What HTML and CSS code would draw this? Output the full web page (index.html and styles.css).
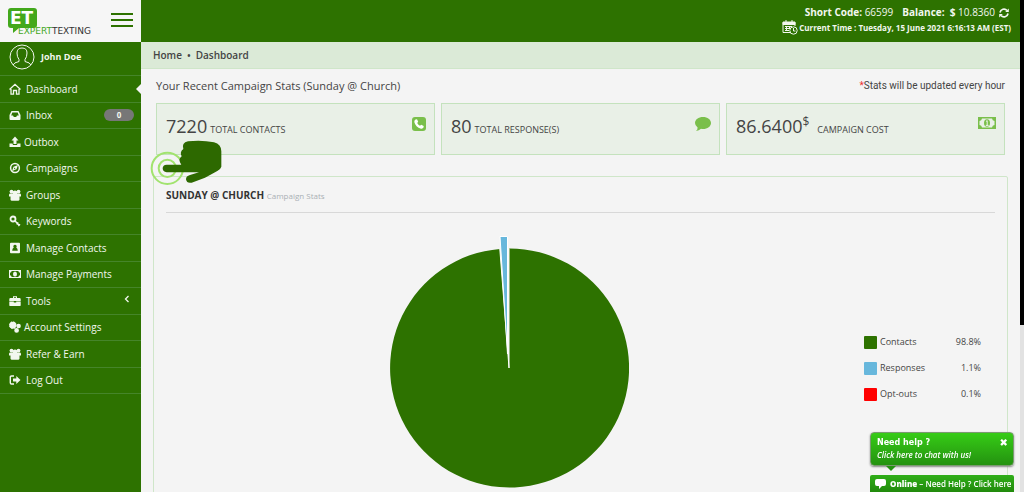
FILE: index.html
```html
<!DOCTYPE html>
<html lang="en">
<head>
<meta charset="utf-8">
<title>Expert Texting - Dashboard</title>
<meta name="viewport" content="width=device-width, initial-scale=1">
<link rel="stylesheet" href="styles.css">
</head>
<body>
<svg class="sprite" aria-hidden="true">
  <symbol id="money" viewBox="0 0 18 12"><path fill="currentColor" fill-rule="evenodd" d="M0 0h18v12H0zM4 1.500A3 3 0 0 1 1.500 4v4A3 3 0 0 1 4 10.500h10A3 3 0 0 1 16.500 8V4A3 3 0 0 1 14 1.500z"/><ellipse cx="9" cy="6" rx="3" ry="3.800" fill="currentColor"/><path d="M8 4.500 9.200 3.600v4.800M7.800 8.400h2.800" fill="none" stroke="#eef4ec"/></symbol>
  <symbol id="groups" viewBox="0 0 12 12"><circle cx="2.500" cy="2.600" r="1.900"/><circle cx="9.500" cy="2.600" r="1.900"/><circle cx="6" cy="4" r="2.400"/><path d="M0 7.500V5.800Q.2 4.400 1.500 4.500h9Q11.800 4.400 12 5.800v1.700h-1.500v3.300q-.3 1-1.300 1H2.800q-1 0-1.300-1V7.500z"/></symbol>
</svg>
<div class="app">
  <header class="brand">
    <a class="logo" href="#" aria-label="Expert Texting">
      <svg width="80" height="28" viewBox="0 0 80 28" aria-hidden="true">
        <path class="logo-mark" d="M3 0h23q3 0 3 3v14q0 3-3 3H11l-6 5V20H3q-3 0-3-3V3q0-3 3-3z"/>
        <text class="logo-letters" x="2" y="16">ET</text>
      </svg>
      <span class="logo-name"><span class="logo-first">EXPERT</span>TEXTING</span>
    </a>
    <button class="menu-button" type="button" aria-label="Toggle menu"><span></span><span></span><span></span></button>
  </header>
  <header class="topbar">
    <div class="account"><span><b>Short Code:</b> 66599</span><span><b>Balance:</b>&nbsp; <b>$</b> 10.8360</span>
      <button class="refresh" type="button" aria-label="Refresh balance"><svg width="10" height="10" viewBox="0 0 10 10"><path d="M1 4.500A4 4 0 0 1 8 2.500M9 5.500A4 4 0 0 1 2 7.500" fill="none" stroke="currentColor" stroke-width="1.700"/><path d="M9.800.4V4H6.200zM.2 9.600V6h3.600z" fill="currentColor"/></svg></button>
    </div>
    <div class="clock">
      <svg width="16" height="15" viewBox="0 0 16 15" fill="none" stroke="currentColor"><path d="M8 12.500H1V2h12v4M1 4.500h12M4 0v3M10 0v3M3 6.500h7M3 8.500h5M3 10.500h4M4.500 6v5M7.500 6v3"/><path d="M1 2.500h12v2H1z" fill="currentColor"/><circle cx="11.500" cy="10.500" r="3.700"/><path d="M11.500 8v3H13.500"/></svg>
      <span>Current Time : Tuesday, 15 June 2021 6:16:13 AM (EST)</span>
    </div>
  </header>
  <aside class="sidebar">
    <div class="user">
      <svg width="26" height="26" viewBox="0 0 26 26" fill="none" stroke="currentColor"><circle cx="13" cy="13" r="12"/><path d="M4 21Q5 18.500 10 17.500v-2Q8 13 8 9q0-5 5-5t5 5q0 4-2 6.500v2q5 1 6 3.500"/></svg>
      <span>John Doe</span>
    </div>
    <nav class="nav">
      <a class="active" href="#"><svg viewBox="0 0 12 12"><path d="M.5 6.500 6 1.300l5.500 5.200M2 6v5.200h2.500V7.500h3v3.700H10V6" fill="none" stroke="currentColor" stroke-width="1.300"/></svg>Dashboard</a>
      <a href="#"><svg viewBox="0 0 12 12"><path fill-rule="evenodd" d="M2.500 2h7L11.500 6v4q0 1-1 1h-9q-1 0-1-1V6zm.8 1.500L2.200 6.500H4l.8 1.500h2.400L8 6.500h1.800L8.700 3.500z"/></svg>Inbox<span class="count">0</span></a>
      <a class="tight" href="#"><svg viewBox="0 0 12 12"><path d="M6 .5 9.500 4.500h-2V8h-3V4.500h-2zM.5 7.500h3L4 9h4l.5-1.500h3V11H.5z"/></svg>Outbox</a>
      <a href="#"><svg viewBox="0 0 12 12"><circle cx="6" cy="6" r="4.400" fill="none" stroke="currentColor" stroke-width="1.500"/><path fill-rule="evenodd" d="M9 3 7.500 7.200 3 9l1.500-4.200zM5.300 5.500 6.500 6.700 5 7.200z"/></svg>Campaigns</a>
      <a href="#"><svg><use href="#groups"/></svg>Groups</a>
      <a href="#"><svg viewBox="0 0 12 12"><path d="M5.800 5.800 10.500 10.500M7.500 9.300 9.300 7.500M9.300 11 11 9.300" stroke="currentColor" stroke-width="1.500"/><circle cx="4" cy="4" r="2.500" fill="none" stroke="currentColor" stroke-width="1.800"/></svg>Keywords</a>
      <a href="#"><svg viewBox="0 0 12 12"><path fill-rule="evenodd" d="M2 .8h8q1 0 1 1v8.400q0 1-1 1H2q-1 0-1-1V1.800q0-1 1-1zM6 2.700a1.700 1.700 0 0 0-1.200 2.900Q3.200 6.300 3.200 8.700h5.600Q8.800 6.300 7.200 5.600A1.700 1.700 0 0 0 6 2.700z"/></svg>Manage Contacts</a>
      <a href="#"><svg><use href="#money"/></svg>Manage Payments</a>
      <a href="#"><svg viewBox="0 0 12 12"><path fill-rule="evenodd" d="M4 3V1.300h4V3h2.500q1.200 0 1.200 1.200v2.300H7.200v-.4H4.800v.4H.3V4.200Q.3 3 1.500 3zm1 0h2v-.8H5zM.3 7h4.500v.5h2.400V7h4.500v3.200q0 .9-1.200.9h-9Q.3 11.100.3 10.200z"/></svg>Tools<svg class="chevron" viewBox="0 0 6 8"><path d="M4.500 1 1.500 4l3 3" fill="none" stroke="currentColor" stroke-width="1.300"/></svg></a>
      <a class="tight" href="#"><svg viewBox="0 0 12 12" fill="none" stroke="currentColor"><g stroke-width="1.700"><circle cx="3.800" cy="4.200" r="2.300"/><circle cx="9.600" cy="5" r="1.400"/><circle cx="7.600" cy="9.400" r="1.500"/></g><circle cx="3.800" cy="4.200" r="3.400" stroke-dasharray="1.300 1.400"/></svg>Account Settings</a>
      <a href="#"><svg><use href="#groups"/></svg>Refer &amp; Earn</a>
      <a href="#"><svg viewBox="0 0 12 12"><path d="M5 2H2.500Q1.300 2 1.300 3.200v5.600Q1.300 10 2.500 10H5" fill="none" stroke="currentColor" stroke-width="1.400"/><path d="M4 4.500h3.300V2L11.500 6 7.300 10V7.500H4z"/></svg>Log Out</a>
    </nav>
  </aside>
  <main class="main">
    <nav class="breadcrumb" aria-label="Breadcrumb"><a href="#">Home</a><span>•</span><a href="#">Dashboard</a></nav>
    <div class="content">
      <div class="intro"><h1>Your Recent Campaign Stats (Sunday @ Church)</h1><p><span class="star">*</span>Stats will be updated every hour</p></div>
      <section class="cards">
        <article class="card"><span class="value">7220</span><span class="label">TOTAL CONTACTS</span>
          <svg width="14" height="14" viewBox="0 0 14 14"><rect width="14" height="14" rx="3" fill="currentColor"/><path d="M3.500 2.500 5 2.300 6.200 4.800 5.200 6Q6.300 8 8 8.800L9.200 7.800l2.500 1.300-.2 1.500Q10.800 12 9 11.700 3.500 10 2.300 5 2.200 3.300 3.500 2.500z" fill="#fff"/></svg></article>
        <article class="card"><span class="value">80</span><span class="label">TOTAL RESPONSE(S)</span>
          <svg width="16" height="14" viewBox="0 0 16 14"><path fill="currentColor" d="M8 0c4.500 0 8 2.600 8 6s-3.500 6-8 6q-1 0-2-.2Q4 13.700 1 14q1.800-1.500 1.600-3.500Q0 8.700 0 6c0-3.400 3.500-6 8-6z"/></svg></article>
        <article class="card"><span class="value">86.6400<sup>$</sup></span><span class="label wide">CAMPAIGN COST</span>
          <svg width="18" height="12"><use href="#money"/></svg></article>
      </section>
      <section class="panel">
        <h2>SUNDAY @ CHURCH <small>Campaign Stats</small></h2>
        <div class="chart">
          <svg class="pie" width="240" height="268" viewBox="0 0 240 268" role="img" aria-label="Campaign stats pie chart">
            <path fill="#2d7200" d="M120 134V14.500A119.500 119.500 0 1 1 110.800 14.900z"/>
            <path d="M120 134V14.500M120 134 110.800 14.900" stroke="#fff"/>
            <path fill="#67b7dc" stroke="#fff" d="M118.500 120V2.500H111z"/>
          </svg>
          <table class="legend">
            <tr><th scope="row"><i class="swatch contacts"></i>Contacts</th><td>98.8%</td></tr>
            <tr><th scope="row"><i class="swatch responses"></i>Responses</th><td>1.1%</td></tr>
            <tr><th scope="row"><i class="swatch optouts"></i>Opt-outs</th><td>0.1%</td></tr>
          </table>
        </div>
      </section>
    </div>
    <svg class="pointer" width="78" height="52" viewBox="24 204 234 156" aria-hidden="true">
      <g fill="none" stroke="#a2e36f" stroke-width="6"><circle cx="82" cy="295" r="47"/><circle cx="82" cy="295" r="26"/></g>
      <path fill="#2d6900" d="M144 214Q185 209 222 217 244 223 244 244V290Q241 299 232 303L195 323 155 338Q140 341 138 328 138 318 150 315L177 307H80Q68 305 68 295T80 284H124Q112 268 125 259 118 246 130 237 124 219 144 214z"/>
    </svg>
  </main>
  <div class="edge" aria-hidden="true"></div>
</div>
<div class="chat">
  <div class="chat-tip">
    <div><strong>Need help ?</strong><em>Click here to chat with us!</em></div>
    <button type="button" aria-label="Close">✖</button>
  </div>
  <button class="chat-bar" type="button"><svg width="11" height="10" viewBox="0 0 11 10"><path fill="#fff" d="M2 0h7q2 0 2 2v3q0 2-2 2H7L4 10V7H2Q0 7 0 5V2Q0 0 2 0z"/></svg><span><b>Online</b> – Need Help ? Click here</span></button>
</div>
</body>
</html>
```
FILE: styles.css
```css
* { box-sizing: border-box; }
body { margin: 0; overflow: hidden; background: #f4f4f4; color: #444; font-family: "Open Sans", sans-serif; font-size: 11px; line-height: 16px; }
a { color: inherit; text-decoration: none; }
button { padding: 0; border: 0; background: none; color: inherit; font: inherit; cursor: pointer; }
h1, h2, p { margin: 0; }
.sprite { display: none; }
.app { display: grid; grid-template-columns: 141px 1fr 4px; grid-template-rows: 42px minmax(0, 1fr); height: 100vh; overflow: hidden; }

.brand { display: flex; justify-content: space-between; padding: 8px 8px 0; background: #f6f6f6; }
.logo { position: relative; }
.logo svg { display: block; }
.logo-mark { fill: #43a81c; }
.logo-letters { fill: #fff; font: bold 17px "DejaVu Sans", sans-serif; }
.logo-name { position: absolute; left: 10px; top: 19px; color: #333; font: 9px/8px "DejaVu Sans", sans-serif; }
.logo-first { color: #43a81c; }
.menu-button { display: flex; flex-direction: column; gap: 4px; width: 22px; height: 24px; padding-top: 5px; }
.menu-button span { height: 2px; background: #2d7200; }

.topbar { display: flex; flex-direction: column; align-items: flex-end; padding: 5px 9px 0 8px; background: #2d7200; color: #f2f7ef; }
.account { display: flex; align-items: center; gap: 9px; padding-right: 2px; font-size: 10px; line-height: 15px; }
.refresh { display: flex; margin-left: -5px; }
.clock { display: flex; align-items: center; gap: 1px; font-size: 8px; font-weight: bold; line-height: 14px; }

.sidebar { background: #2d7200; color: #f2f7ef; }
.user { display: flex; align-items: center; gap: 6px; height: 33px; padding: 0 9px 4px; font-size: 9px; font-weight: bold; }
.nav { display: grid; grid-auto-rows: 1fr; height: 319px; border-bottom: 1px solid #45852a; font-size: 10px; }
.nav a { position: relative; display: flex; align-items: center; gap: 5px; padding: 0 7px 0 9px; border-top: 1px solid #45852a; }
.nav a.tight { gap: 3px; }
.nav svg { width: 12px; height: 12px; fill: currentColor; }
.nav a.active::after { content: ""; position: absolute; right: 0; top: 8px; border: 5px solid transparent; border-left: 0; border-right-color: #f4f4f4; }
.count { width: 30px; height: 12px; margin-left: auto; border-radius: 6px; background: #777; font-size: 8px; font-weight: bold; line-height: 12px; text-align: center; }
.nav .chevron { width: 6px; height: 8px; margin: 0 4px 4px auto; }

.main { position: relative; display: flex; flex-direction: column; min-width: 0; }
.breadcrumb { display: flex; flex: none; gap: 5px; height: 27px; padding: 5px 12px; border-bottom: 1px solid #cfe6c9; background: #dbead7; font-size: 10px; font-weight: 600; }
.content { display: flex; flex: 1; flex-direction: column; padding: 9px 12px 0; }
.intro { display: flex; justify-content: space-between; padding: 0 3px; }
.intro h1 { font-size: 11px; font-weight: normal; }
.intro p { font-family: Roboto, sans-serif; font-size: 10px; }
.star { color: #e33; }
.cards { display: grid; grid-template-columns: repeat(3, 1fr); gap: 6px; margin: 9px 3px 21px; }
.card { display: flex; align-items: baseline; gap: 3px; height: 52px; padding: 9px 8px 0 9px; border: 1px solid #c4e2bd; background: #e9f0e7; }
.card svg { align-self: flex-start; margin: 4px 0 0 auto; color: #7abf4b; }
.value { font-size: 18px; line-height: 26px; }
.value sup { font-size: 12px; line-height: 0; }
.label { font-size: 9px; }
.label.wide { margin-left: 5px; }
.panel { flex: none; padding: 10px 12px 0; border: 1px solid #cfe6c9; border-radius: 2px; }
.panel h2 { padding-bottom: 8px; border-bottom: 1px solid #d8d8d8; color: #333; font-size: 10px; }
.panel small { color: #aab0b4; font-size: 8px; font-weight: normal; }
.chart { display: grid; grid-template-columns: 1fr 144px; align-items: center; padding-top: 21px; }
.pie { justify-self: center; }
.legend { width: 117px; margin-left: 13px; border-spacing: 0; font-size: 9px; }
.legend th, .legend td { height: 26px; padding: 0; font-weight: normal; text-align: right; }
.legend th { display: flex; align-items: center; gap: 3px; }
.swatch { width: 13px; height: 13px; border-radius: 1px; }
.contacts { background: #2d7200; }
.responses { background: #67b7dc; }
.optouts { background: #f00; }
.pointer { position: absolute; left: 7px; top: 96px; }
.edge { grid-column: 3; grid-row: 1 / 3; background: linear-gradient(#000 66%, #e2e2e2 66%); }

.chat { position: fixed; right: 10px; bottom: 0; display: flex; flex-direction: column; gap: 9px; width: 144px; color: #fff; }
.chat-tip { position: relative; display: flex; justify-content: space-between; align-items: flex-start; height: 34px; padding: 4px 5px 0 6px; border: 1px solid #7a9a70; border-radius: 4px; background: linear-gradient(#36cc16, #249210); box-shadow: 0 1px 2px #888; font-family: "DejaVu Sans", sans-serif; }
.chat-tip::after { content: ""; position: absolute; left: 15px; top: 33px; border: 5px solid transparent; border-bottom: 0; border-top-color: #249210; }
.chat-tip div { display: grid; line-height: 12px; white-space: nowrap; }
.chat-tip strong { font-size: 8px; }
.chat-tip em { font-family: "Open Sans", sans-serif; font-size: 8px; font-weight: 600; }
.chat-tip button { font-size: 10px; line-height: 12px; }
.chat-bar { display: flex; align-items: center; gap: 4px; height: 17px; padding: 0 5px; border-radius: 2px 2px 0 0; background: linear-gradient(#2fae18, #218a0c); font-size: 8px; font-weight: 600; white-space: nowrap; }
.chat-bar svg { flex: none; }
```
